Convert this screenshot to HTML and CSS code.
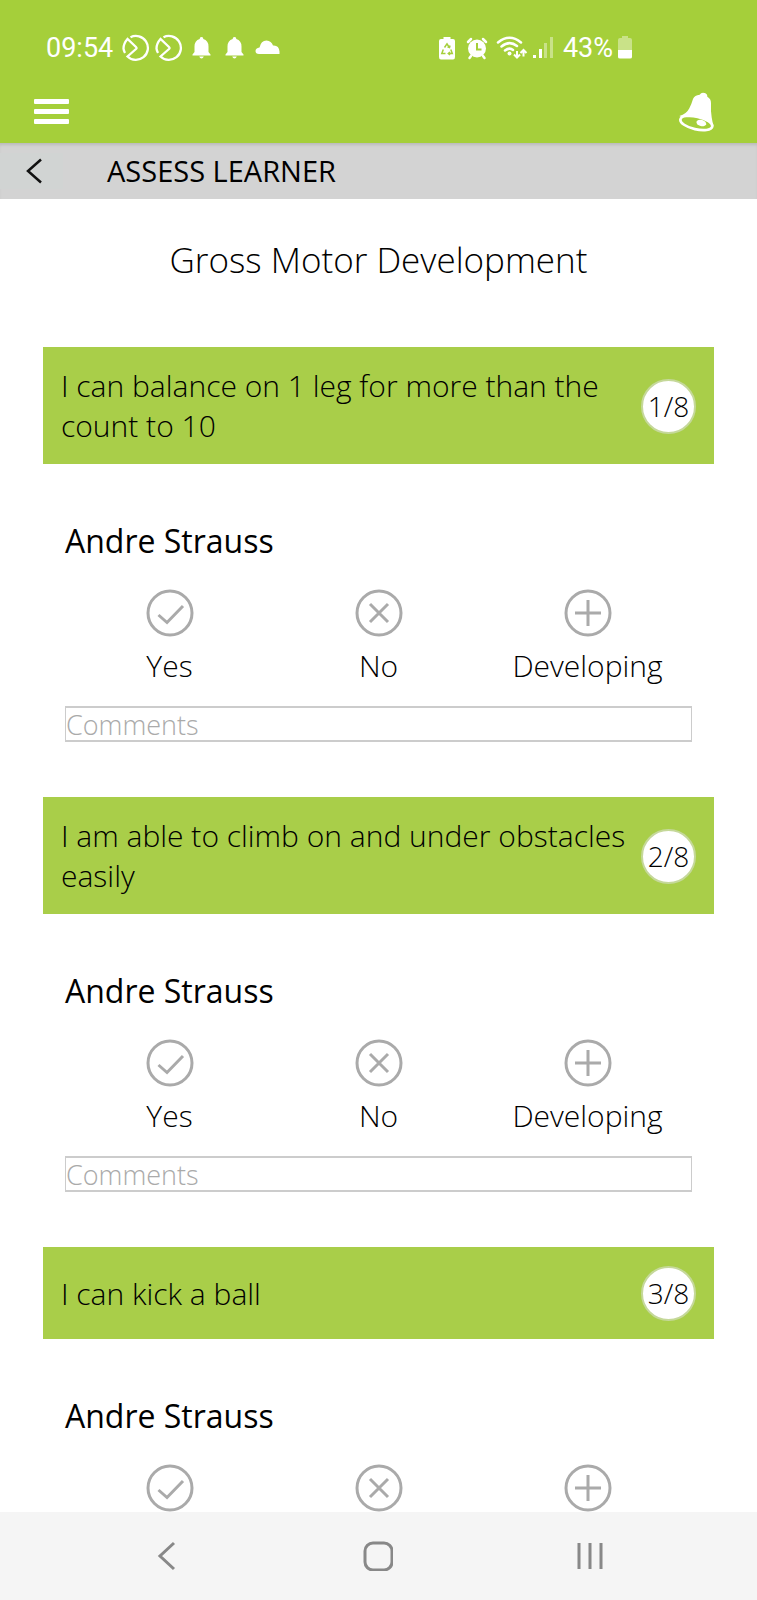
FILE: index.html
```html
<!DOCTYPE html>
<html lang="en">
<head>
  <meta charset="UTF-8">
  <meta name="viewport" content="width=device-width, initial-scale=1.0">
  <title>Assess Learner</title>
  <link rel="stylesheet" href="styles.css">
</head>
<body>
  <!-- shared icons -->
  <svg class="sprite" aria-hidden="true">
    <symbol id="icon-yes" viewBox="0 0 48 48">
      <circle cx="24" cy="24" r="22"/>
      <path d="M12.500 26 L21 33.500 L37 17"/>
    </symbol>
    <symbol id="icon-no" viewBox="0 0 48 48">
      <circle cx="24" cy="24" r="22"/>
      <path d="M15 15 L33 33 M33 15 L15 33"/>
    </symbol>
    <symbol id="icon-developing" viewBox="0 0 48 48">
      <circle cx="24" cy="24" r="22"/>
      <path d="M24 11 V37 M11 24 H37"/>
    </symbol>
    <symbol id="icon-sync" viewBox="0 0 33 28">
      <path d="M11.500 3.200 A12 12 0 1 1 8.500 22.500 L17 15 Q18 14 17 13 L8.500 5 Q4.500 9.500 4.500 14.500 Q4.800 17 6 19" fill="none" stroke="#fff" stroke-width="2.300"/>
    </symbol>
    <symbol id="icon-bell" viewBox="0 0 33 28">
      <path fill="#fff" d="M16.500 3 a1.800 1.800 0 0 1 1.800 2 Q23.500 6.500 23.500 12.500 V18 L25.500 20.500 V21.500 H7.500 V20.500 L9.500 18 V12.500 Q9.500 6.500 14.700 5 A1.800 1.800 0 0 1 16.500 3 Z M14.200 22.500 H18.800 Q18 24.500 16.500 24.500 Q15 24.500 14.200 22.500 Z"/>
    </symbol>
  </svg>

  <header class="header">
    <div class="status">
      <div class="status-group">
        <span class="clock">09:54</span>
        <svg width="33" height="28"><use href="#icon-sync"/></svg>
        <svg width="33" height="28"><use href="#icon-sync"/></svg>
        <svg width="33" height="28"><use href="#icon-bell"/></svg>
        <svg width="33" height="28"><use href="#icon-bell"/></svg>
        <svg width="33" height="28" viewBox="0 0 33 28">
          <path fill="#fff" d="M8 20 Q4.500 20 4.500 17 Q4.500 14 8.500 13.500 Q10 6.500 15.500 6.500 Q20.500 7 22 11.500 Q28 11 28.500 17.500 V20 Z"/>
        </svg>
      </div>
      <div class="status-group">
        <svg width="30" height="28" viewBox="0 0 30 28">
          <path fill="#fff" d="M11.500 3 H18.500 V5 H21 Q23 5 23 7 V23 Q23 25.500 21 25.500 H9 Q7 25.500 7 23 V7 Q7 5 9 5 H11.500 Z"/>
          <path fill="none" stroke="#a5cf3a" stroke-width="1.500" d="M12.500 13.500 L15 9.800 L17.300 13.500 M18.800 15.500 L20.300 19.500 H16.500 M13.500 19.500 H9.800 L11.300 15.500 M15.500 12.800 L17.500 13.500 L18 11.500 M18 18 L16.300 19.500 L18 21"/>
        </svg>
        <svg width="30" height="28" viewBox="0 0 30 28">
          <circle cx="15" cy="14.500" r="9" fill="#fff"/>
          <path fill="none" stroke="#fff" stroke-width="2.500" stroke-linecap="round" d="M6 8 L9 5 M21 5 L24 8 M9 22 L7.500 24 M21 22 L22.500 24"/>
          <path fill="none" stroke="#a5cf3a" stroke-width="2" d="M15 9 V15.500 H19.500"/>
        </svg>
        <svg width="38" height="28" viewBox="0 0 38 28">
          <path fill="none" stroke="#fff" stroke-width="2.500" stroke-linecap="round" d="M6 8.500 Q17.500 -1 29 8.500 M9.500 12.500 Q17.500 6 25 12 M13 16.500 Q17.500 13 21 16"/>
          <circle cx="17.500" cy="19.500" r="2" fill="#fff"/>
          <path fill="none" stroke="#fff" stroke-width="2" d="M25 17 V23 M22 20.500 L25 23.500 L28 20.500 M31.500 22.500 V16.500 M28.500 19 L31.500 16 L34.500 19"/>
        </svg>
        <svg width="26" height="28" viewBox="0 0 26 28" fill="#fff">
          <rect x="3" y="21" width="3" height="3"/>
          <rect x="9" y="15" width="3" height="9"/>
          <rect x="14" y="9" width="3" height="15" opacity=".4"/>
          <rect x="20" y="3" width="3" height="21" opacity=".4"/>
        </svg>
        <span class="percent">43%</span>
        <svg width="16" height="28" viewBox="0 0 16 28" fill="#fff">
          <path opacity=".4" d="M5 2 H11 V4 H13 Q15 4 15 6 V16 H1 V6 Q1 4 3 4 H5 Z"/>
          <path d="M1 16 H15 V23 Q15 24.500 13 24.500 H3 Q1 24.500 1 23 Z"/>
        </svg>
      </div>
    </div>
    <div class="toolbar">
      <button class="icon-button" type="button" aria-label="Menu">
        <svg width="35" height="26" viewBox="0 0 35 26" fill="#fff">
          <rect y="0" width="35" height="5" rx="1"/>
          <rect y="10" width="35" height="5" rx="1"/>
          <rect y="20" width="35" height="5" rx="1"/>
        </svg>
      </button>
      <button class="icon-button" type="button" aria-label="Notifications">
        <svg width="36" height="40" viewBox="0 0 108 120">
          <path fill="#fff" d="M4 72 Q26 66 34 49 Q41 35 45 21 Q50 9 65 8 Q70 0 80 3 Q88 5 88 14 Q99 20 99 33 Q98 58 101 76 Q103 91 107 101 L55 100 Z"/>
          <ellipse cx="55" cy="93" rx="49" ry="19" transform="rotate(13 55 93)" fill="#a5cf3a" stroke="#fff" stroke-width="8"/>
          <ellipse cx="70" cy="93" rx="15" ry="9" transform="rotate(15 70 93)" fill="#fff"/>
        </svg>
      </button>
    </div>
  </header>

  <div class="page-bar">
    <button class="back" type="button" aria-label="Back">
      <svg width="16" height="26" viewBox="0 0 16 26"><path d="M15 1.500 L2 13 L15 24.500" fill="none" stroke="#111" stroke-width="2.500"/></svg>
    </button>
    <h1>ASSESS LEARNER</h1>
  </div>

  <main class="content">
    <h2 class="title">Gross Motor Development</h2>

    <section class="question">
      <div class="banner">
        <p>I can balance on 1 leg for more than the count to 10</p>
        <span class="badge">1/8</span>
      </div>
      <div class="learner">
        <h3>Andre Strauss</h3>
        <div class="options">
          <label class="option">
            <input type="radio" name="q1" value="yes">
            <svg><use href="#icon-yes"/></svg>
            <span>Yes</span>
          </label>
          <label class="option">
            <input type="radio" name="q1" value="no">
            <svg><use href="#icon-no"/></svg>
            <span>No</span>
          </label>
          <label class="option">
            <input type="radio" name="q1" value="developing">
            <svg><use href="#icon-developing"/></svg>
            <span>Developing</span>
          </label>
        </div>
        <input class="comments" type="text" placeholder="Comments" aria-label="Comments">
      </div>
    </section>

    <section class="question">
      <div class="banner">
        <p>I am able to climb on and under obstacles easily</p>
        <span class="badge">2/8</span>
      </div>
      <div class="learner">
        <h3>Andre Strauss</h3>
        <div class="options">
          <label class="option">
            <input type="radio" name="q2" value="yes">
            <svg><use href="#icon-yes"/></svg>
            <span>Yes</span>
          </label>
          <label class="option">
            <input type="radio" name="q2" value="no">
            <svg><use href="#icon-no"/></svg>
            <span>No</span>
          </label>
          <label class="option">
            <input type="radio" name="q2" value="developing">
            <svg><use href="#icon-developing"/></svg>
            <span>Developing</span>
          </label>
        </div>
        <input class="comments" type="text" placeholder="Comments" aria-label="Comments">
      </div>
    </section>

    <section class="question">
      <div class="banner">
        <p>I can kick a ball</p>
        <span class="badge">3/8</span>
      </div>
      <div class="learner">
        <h3>Andre Strauss</h3>
        <div class="options">
          <label class="option">
            <input type="radio" name="q3" value="yes" aria-label="Yes">
            <svg><use href="#icon-yes"/></svg>
          </label>
          <label class="option">
            <input type="radio" name="q3" value="no" aria-label="No">
            <svg><use href="#icon-no"/></svg>
          </label>
          <label class="option">
            <input type="radio" name="q3" value="developing" aria-label="Developing">
            <svg><use href="#icon-developing"/></svg>
          </label>
        </div>
      </div>
    </section>
  </main>

  <nav class="system-nav">
    <button type="button" aria-label="Go back">
      <svg width="30" height="30" viewBox="0 0 30 30"><path d="M22 2 L8 15 L22 28"/></svg>
    </button>
    <button type="button" aria-label="Home">
      <svg width="30" height="30" viewBox="0 0 30 30"><rect x="2" y="2" width="27" height="27" rx="8"/></svg>
    </button>
    <button type="button" aria-label="Recent apps">
      <svg width="30" height="30" viewBox="0 0 30 30"><path d="M4 2 V28 M15 2 V28 M26 2 V28"/></svg>
    </button>
  </nav>
</body>
</html>
```
FILE: styles.css
```css
* {
  margin: 0;
  padding: 0;
  box-sizing: border-box;
}

body {
  height: 100vh;
  display: flex;
  flex-direction: column;
  overflow: hidden;
  background: #fff;
  color: #000;
  font-family: 'Open Sans', sans-serif;
  font-weight: 300;
}

button {
  border: none;
  background: none;
  cursor: pointer;
}

svg {
  display: block;
}

.sprite {
  position: absolute;
  width: 0;
  height: 0;
}

.header {
  flex: none;
  padding: 4px 0 11px;
  background: #a5cf3a;
}

.status {
  height: 88px;
  display: flex;
  justify-content: space-between;
  align-items: center;
  padding: 0 124px 0 46px;
  color: #fff;
  font-family: Roboto, sans-serif;
  font-size: 27px;
  font-weight: 400;
}

.status-group {
  display: flex;
  align-items: center;
}

.clock {
  margin-right: 6px;
}

.percent {
  margin: 0 4px 0 7px;
}

.toolbar {
  height: 40px;
  display: flex;
  justify-content: space-between;
  align-items: center;
  padding: 0 43px 0 34px;
}

.page-bar {
  flex: none;
  height: 56px;
  display: flex;
  align-items: center;
  gap: 44px;
  background: #d3d3d3;
  box-shadow: inset 0 3px 3px -1px #bbb;
}

.page-bar h1 {
  font-size: 29px;
  font-weight: 400;
  line-height: 40px;
}

.back {
  width: 63px;
  height: 36px;
  padding-left: 26px;
  background: #d1d4d3;
}

.content {
  flex: 1;
  min-height: 0;
  overflow-y: auto;
  scrollbar-width: none;
  padding: 37px 43px 0;
}

.title {
  margin-bottom: 63px;
  font-size: 35px;
  font-weight: 300;
  line-height: 48px;
  text-align: center;
}

.question {
  margin-bottom: 55px;
}

.banner {
  display: flex;
  justify-content: space-between;
  align-items: center;
  gap: 10px;
  padding: 19px 18px 18px;
  background: #a9ce49;
  font-size: 30px;
  line-height: 40px;
}

.badge {
  flex: none;
  width: 55px;
  height: 55px;
  border: 2px solid #c5d89a;
  border-radius: 50%;
  background: #fff;
  font-size: 28px;
  line-height: 51px;
  text-align: center;
}

.learner {
  padding: 55px 22px 0;
}

.learner h3 {
  font-size: 32px;
  font-weight: 400;
  line-height: 44px;
}

.options {
  display: grid;
  grid-template-columns: repeat(3, 1fr);
  margin: 26px 0 20px;
}

.option {
  position: relative;
  display: flex;
  flex-direction: column;
  align-items: center;
  gap: 9px;
  font-size: 30px;
  line-height: 40px;
  cursor: pointer;
}

/* native radio sits invisibly over the icon */
.option input {
  position: absolute;
  width: 48px;
  height: 48px;
  opacity: 0;
}

.option svg {
  width: 48px;
  height: 48px;
  fill: none;
  stroke: #aaa;
  stroke-width: 3;
}

.option input:checked + svg {
  stroke: #a5cf3a;
}

.comments {
  display: block;
  width: 100%;
  height: 36px;
  border: solid #ccc;
  border-width: 2px 1px;
  font: inherit;
  font-size: 27px;
}

.comments::placeholder {
  color: #aaa;
}

.system-nav {
  flex: none;
  height: 88px;
  display: grid;
  grid-template-columns: repeat(3, 1fr);
  padding: 0 61px;
  background: #f5f5f5;
}

.system-nav button {
  display: flex;
  justify-content: center;
  align-items: center;
}

.system-nav svg {
  fill: none;
  stroke: #888;
  stroke-width: 3;
}
```
